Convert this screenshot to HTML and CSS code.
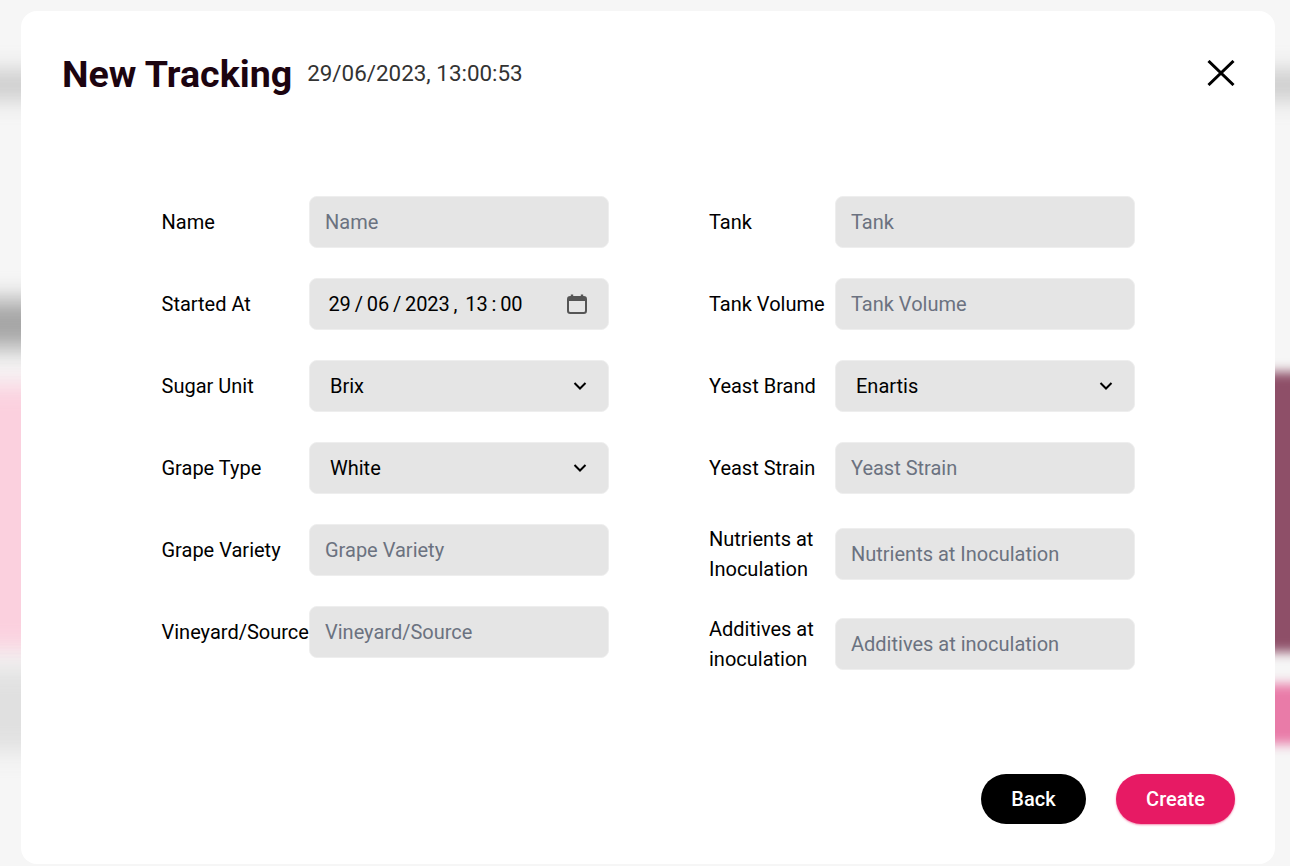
FILE: index.html
```html
<!DOCTYPE html>
<html lang="en">
<head>
<meta charset="utf-8">
<title>New Tracking</title>
<link rel="stylesheet" href="styles.css">
</head>
<body>
<div class="backdrop" aria-hidden="true">
  <div class="blur band-top"></div>
  <div class="blur band-mid"></div>
  <div class="blur band-pink-left"></div>
  <div class="blur band-grey-left"></div>
  <div class="blur band-mauve"></div>
  <div class="blur band-pink-right"></div>
</div>
<main class="modal">
  <header class="modal-head">
    <h1 class="title">New Tracking</h1>
    <span class="stamp">29/06/2023, 13:00:53</span>
    <button class="close" type="button" aria-label="Close">
      <svg width="28" height="26" viewBox="0 0 28 26"><path d="M1.500 1 26.500 25M26.500 1 1.500 25" fill="none" stroke="#000" stroke-width="3"/></svg>
    </button>
  </header>
  <form class="form">
    <div class="col col-left">
      <div class="row"><label class="label">Name</label><input class="field" placeholder="Name"></div>
      <div class="row"><label class="label">Started At</label>
        <div class="field date"><span class="date-text">29 / 06 / 2023 ,&nbsp; 13 : 00</span>
          <svg class="cal" width="20" height="20" viewBox="0 0 20 20"><path d="M5 0.500V3M15 0.500V3" stroke="#555" stroke-width="2.400" fill="none"/><rect x="1" y="3" width="18" height="16" rx="2.200" fill="none" stroke="#555" stroke-width="2"/><path d="M1 3.500h18V7H1z" fill="#555"/></svg>
        </div></div>
      <div class="row"><label class="label">Sugar Unit</label>
        <div class="field select"><span>Brix</span><svg width="14" height="10" viewBox="0 0 14 10"><path d="M1.500 2 7 7.500 12.500 2" fill="none" stroke="#000" stroke-width="2"/></svg></div></div>
      <div class="row"><label class="label">Grape Type</label>
        <div class="field select"><span>White</span><svg width="14" height="10" viewBox="0 0 14 10"><path d="M1.500 2 7 7.500 12.500 2" fill="none" stroke="#000" stroke-width="2"/></svg></div></div>
      <div class="row"><label class="label">Grape Variety</label><input class="field" placeholder="Grape Variety"></div>
      <div class="row"><label class="label">Vineyard/Source</label><input class="field" placeholder="Vineyard/Source"></div>
    </div>
    <div class="col col-right">
      <div class="row"><label class="label">Tank</label><input class="field" placeholder="Tank"></div>
      <div class="row"><label class="label">Tank Volume</label><input class="field" placeholder="Tank Volume"></div>
      <div class="row"><label class="label">Yeast Brand</label>
        <div class="field select"><span>Enartis</span><svg width="14" height="10" viewBox="0 0 14 10"><path d="M1.500 2 7 7.500 12.500 2" fill="none" stroke="#000" stroke-width="2"/></svg></div></div>
      <div class="row"><label class="label">Yeast Strain</label><input class="field" placeholder="Yeast Strain"></div>
      <div class="row tall"><label class="label">Nutrients at Inoculation</label><input class="field" placeholder="Nutrients at Inoculation"></div>
      <div class="row tall"><label class="label">Additives at inoculation</label><input class="field" placeholder="Additives at inoculation"></div>
    </div>
  </form>
  <footer class="actions">
    <button class="btn btn-back" type="button">Back</button>
    <button class="btn btn-create" type="button">Create</button>
  </footer>
</main>
</body>
</html>
```
FILE: styles.css
```css
* { box-sizing: border-box; }
html, body { height: 100%; margin: 0; }
body {
  position: relative;
  overflow: hidden;
  background: #f6f6f6;
  font-family: Roboto, "Liberation Sans", sans-serif;
  padding: 11px 15px 2px 21px;
  display: flex;
}
.backdrop { position: absolute; inset: 0; overflow: hidden; }
.blur { position: absolute; filter: blur(12px); }
.band-top { left: -40px; right: -40px; top: 72px; height: 26px; background: #c6c6c6; }
.band-mid { left: -40px; width: 640px; top: 300px; height: 48px; background: #a4a4a4; }
.band-pink-left { left: -40px; width: 640px; top: 384px; height: 266px; background: #fbd0de; }
.band-grey-left { left: -40px; width: 640px; top: 668px; height: 84px; background: #e0e0e0; }
.band-mauve { left: 640px; right: -40px; top: 372px; height: 280px; background: #8e4f68; filter: blur(6px); }
.band-pink-right { left: 640px; right: -40px; top: 684px; height: 60px; background: #e97ba8; filter: blur(6px); }

.modal {
  position: relative;
  flex: 1;
  background: #fff;
  border-radius: 16px;
  display: flex;
  flex-direction: column;
}
.modal-head {
  display: flex;
  align-items: center;
  padding: 40px 40.500px 0 41px;
  height: 85px;
}
.title {
  margin: 0;
  font-size: 37.600px;
  line-height: 50px;
  font-weight: 700;
  color: #1c0410;
}
.stamp {
  margin-left: 15px;
  margin-bottom: 1px;
  font-size: 22.400px;
  color: #333;
}
.close {
  margin-left: auto;
  margin-top: -2px;
  padding: 0;
  border: 0;
  background: none;
  display: flex;
}
.form {
  display: flex;
  gap: 100px;
  padding: 100px 0 0 140.500px;
}
.col { display: flex; flex-direction: column; gap: 30px; }
.col-left { width: 447.500px; }
.col-right { width: 426px; }
.row { display: flex; align-items: center; min-height: 52px; }
.label {
  flex: none;
  font-size: 20px;
  line-height: 30px;
  color: #000;
}
.col-left .label { width: 147.500px; white-space: nowrap; }
.col-right .label { width: 126px; padding-right: 6px; }
.field {
  flex: none;
  width: 300px;
  height: 52px;
  background: #e5e5e5;
  border: 1px solid #eeeeee;
  border-radius: 8px;
  padding: 0 15px;
  font: 20px Roboto, "Liberation Sans", sans-serif;
  color: #000;
  outline: none;
}
.field::placeholder { color: #6b7280; opacity: 1; }
.date, .select { display: flex; align-items: center; justify-content: space-between; }
.date { padding: 0 21px 0 18.500px; }
.date-text { letter-spacing: -0.150px; word-spacing: -0.800px; }
.select { padding: 0 21px 0 20px; }
.actions {
  margin-top: auto;
  display: flex;
  justify-content: flex-end;
  gap: 30px;
  padding: 0 40px 40px 0;
}
.btn {
  height: 50px;
  border: 0;
  border-radius: 25px;
  font: 500 20px Roboto, "Liberation Sans", sans-serif;
  color: #fff;
}
.btn-back { width: 105px; background: #000; }
.btn-create { width: 119px; background: #e71a64; box-shadow: 0 1px 2px rgba(233, 30, 99, .5); }
```
